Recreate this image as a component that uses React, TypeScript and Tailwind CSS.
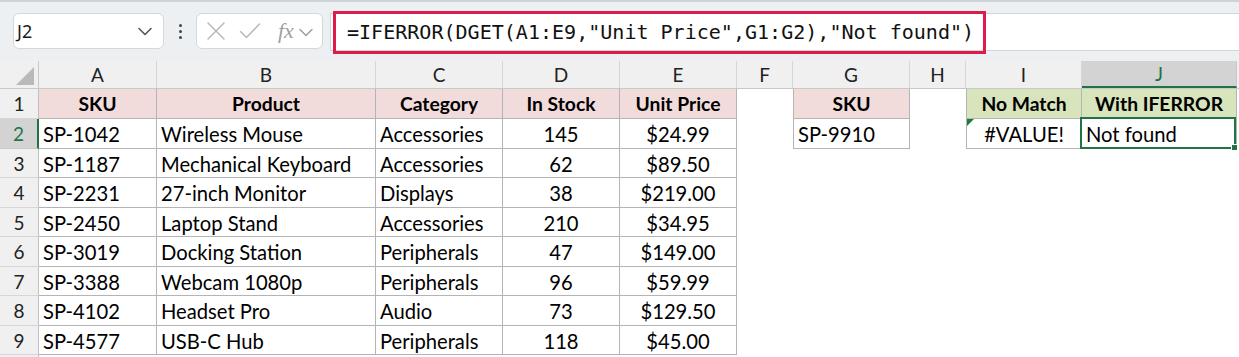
import React from "react";

type Cell = {
  t?: string;
  bg?: "pink" | "green";
  bold?: boolean;
  center?: boolean;
  bordered?: boolean;
  bl?: boolean;
  err?: boolean;
  sel?: boolean;
};

const widths = [118, 219, 127, 117, 117, 56, 117, 56, 116, 155];
const letters = ["A", "B", "C", "D", "E", "F", "G", "H", "I", "J"];
const rowHeights = [30, 30, 29, 30, 29, 30, 29, 30, 29];

const data: [string, string, string, string, string][] = [
  ["SP-1042", "Wireless Mouse", "Accessories", "145", "$24.99"],
  ["SP-1187", "Mechanical Keyboard", "Accessories", "62", "$89.50"],
  ["SP-2231", "27-inch Monitor", "Displays", "38", "$219.00"],
  ["SP-2450", "Laptop Stand", "Accessories", "210", "$34.95"],
  ["SP-3019", "Docking Station", "Peripherals", "47", "$149.00"],
  ["SP-3388", "Webcam 1080p", "Peripherals", "96", "$59.99"],
  ["SP-4102", "Headset Pro", "Audio", "73", "$129.50"],
  ["SP-4577", "USB-C Hub", "Peripherals", "118", "$45.00"],
];

function buildRows(): Cell[][] {
  const rows: Cell[][] = [];
  rows.push([
    { t: "SKU", bg: "pink", bold: true, center: true, bordered: true },
    { t: "Product", bg: "pink", bold: true, center: true, bordered: true },
    { t: "Category", bg: "pink", bold: true, center: true, bordered: true },
    { t: "In Stock", bg: "pink", bold: true, center: true, bordered: true },
    { t: "Unit Price", bg: "pink", bold: true, center: true, bordered: true },
    {},
    { t: "SKU", bg: "pink", bold: true, center: true, bordered: true, bl: true },
    {},
    { t: "No Match", bg: "green", bold: true, center: true, bordered: true, bl: true },
    { t: "With IFERROR", bg: "green", bold: true, center: true, bordered: true },
  ]);
  data.forEach((r, i) => {
    const row: Cell[] = [
      { t: r[0], bordered: true },
      { t: r[1], bordered: true },
      { t: r[2], bordered: true },
      { t: r[3], bordered: true, center: true },
      { t: r[4], bordered: true, center: true },
    ];
    if (i === 0) {
      row.push({}, { t: "SP-9910", bordered: true, bl: true }, {}, { t: "#VALUE!", bordered: true, bl: true, center: true, err: true }, { t: "Not found", bordered: true, sel: true });
    } else {
      row.push({}, {}, {}, {}, {});
    }
    rows.push(row);
  });
  return rows;
}

function Chevron() {
  return (
    <svg width="14" height="9" viewBox="0 0 14 9" fill="none">
      <path d="M1 1.5 L7 7.5 L13 1.5" stroke="#555" strokeWidth="1.6" strokeLinecap="round" strokeLinejoin="round" />
    </svg>
  );
}

function Toolbar() {
  return (
    <div className="h-[61px] bg-[#edf0f3] border-t-[2px] border-[#cfd2d6] flex items-start pt-[11px]">
      <div className="ml-[13px] w-[151px] h-[36px] bg-white rounded-[6px] border border-[#d5d8db] flex items-center justify-between pl-[3px] pr-[11px]">
        <span className="text-[18px] text-[#1a1a1a] font-['Noto_Sans',sans-serif] leading-none">J2</span>
        <Chevron />
      </div>
      <div className="w-[32px] h-[36px] flex flex-col items-center justify-center gap-[3px]">
        <div className="w-[3px] h-[3px] rounded-full bg-[#444]" />
        <div className="w-[3px] h-[3px] rounded-full bg-[#444]" />
        <div className="w-[3px] h-[3px] rounded-full bg-[#444]" />
      </div>
      <div className="w-[127px] h-[36px] bg-white rounded-[6px] border border-[#d5d8db] flex items-center pl-[9px]">
        <svg width="20" height="20" viewBox="0 0 20 20" fill="none">
          <path d="M2 2 L18 18 M18 2 L2 18" stroke="#b8b8b8" strokeWidth="1.5" strokeLinecap="round" />
        </svg>
        <svg width="22" height="18" viewBox="0 0 22 18" fill="none" className="ml-[13px]">
          <path d="M1.5 9.5 L7.5 15.5 L20.5 2" stroke="#b8b8b8" strokeWidth="1.5" strokeLinecap="round" strokeLinejoin="round" />
        </svg>
        <span className="ml-[17px] text-[22px] italic text-[#a0a0a0] font-['Liberation_Serif',serif] leading-none">fx</span>
        <div className="ml-[5px] mt-[2px]">
          <svg width="14" height="9" viewBox="0 0 14 9" fill="none">
            <path d="M1 1.5 L7 7.5 L13 1.5" stroke="#9a9a9a" strokeWidth="1.4" strokeLinecap="round" strokeLinejoin="round" />
          </svg>
        </div>
      </div>
      <div className="ml-[7px] flex-1 h-[38px] bg-white border-y border-l border-[#d3d6d9] flex items-center">
        <div className="ml-[2px] w-[653px] h-[43px] shrink-0 border-[3px] border-[#dd1c4b] flex items-center pl-[11px] pt-[1px]">
          <span className="text-[20.05px] text-[#111] font-['DejaVu_Sans_Mono',monospace] leading-none whitespace-nowrap">
            =IFERROR(DGET(A1:E9,"Unit Price",G1:G2),"Not found")
          </span>
        </div>
      </div>
    </div>
  );
}

function ColumnHeader() {
  return (
    <div className="flex h-[28px] bg-[#f0f0f0] border-b border-[#c8c8c8]">
      <div className="w-[39px] shrink-0 relative border-r border-[#c8c8c8]">
        <svg width="20" height="20" viewBox="0 0 20 20" className="absolute right-[3px] bottom-[2px]">
          <polygon points="19,1 19,19 1,19" fill="#b9b9b9" />
        </svg>
      </div>
      {letters.map((l, i) => {
        const sel = l === "J";
        return (
          <div
            key={l}
            style={{ width: widths[i] }}
            className={
              sel
                ? "shrink-0 flex items-center justify-center pt-[2px] bg-[#d3d3d3] border-b-[2px] border-b-[#217346] border-r border-r-[#c8c8c8] text-[#217346] text-[19px] font-['Lato',sans-serif]"
                : "shrink-0 flex items-center justify-center pt-[2px] border-r border-[#d6d6d6] text-[#222] text-[19px] font-['Lato',sans-serif]"
            }
          >
            {l}
          </div>
        );
      })}
    </div>
  );
}

function DataCell({ c, w }: { c: Cell; w: number }) {
  const bgc = c.bg === "pink" ? "bg-[#f2dcdb]" : c.bg === "green" ? "bg-[#d8e4bc]" : "bg-white";
  const border = c.bordered ? "border-r border-b border-[#b4b4b4]" : "";
  const bl = c.bl ? "border-l" : "";
  const align = c.center ? "justify-center" : "justify-start pl-[4px]";
  const weight = c.bold ? "font-bold text-[19.3px]" : "font-normal text-[20.2px]";
  const z = c.sel ? "z-10" : "";
  return (
    <div
      style={{ width: w }}
      className={`shrink-0 relative flex items-center pt-[2px] ${z} ${bgc} ${border} ${bl} ${align} ${weight} text-black font-['Lato',sans-serif] whitespace-nowrap`}
    >
      {c.t}
      {c.err && (
        <svg width="7" height="7" viewBox="0 0 7 7" className="absolute left-[0px] top-[0px]">
          <polygon points="0,0 7,0 0,7" fill="#1e7b3c" />
        </svg>
      )}
      {c.sel && (
        <div className="absolute left-[-2px] top-[-2px] right-[0px] bottom-[-1px] border-[2px] border-[#217346]">
          <div className="absolute right-[-4px] bottom-[-4px] w-[7px] h-[7px] bg-[#217346] border border-white" />
        </div>
      )}
    </div>
  );
}

export default function App() {
  const rows = buildRows();
  return (
    <div className="w-[1239px] h-[357px] overflow-hidden bg-white">
      <Toolbar />
      <ColumnHeader />
      {rows.map((r, i) => {
        const selRow = i === 1;
        return (
          <div key={i} className={selRow ? "flex relative z-10" : "flex"} style={{ height: rowHeights[i] }}>
            <div
              className={
                selRow
                  ? "w-[39px] shrink-0 flex items-center justify-center pt-[2px] bg-[#d3d3d3] border-r-[2px] border-r-[#217346] border-b border-b-[#c8c8c8] text-[#217346] text-[19px] font-['Lato',sans-serif]"
                  : "w-[39px] shrink-0 flex items-center justify-center pt-[2px] bg-[#f0f0f0] border-r border-r-[#c0c0c0] border-b border-b-[#d6d6d6] text-[#222] text-[19px] font-['Lato',sans-serif]"
              }
            >
              {i + 1}
            </div>
            {r.map((c, j) => (
              <DataCell key={j} c={c} w={widths[j]} />
            ))}
          </div>
        );
      })}
      <div className="flex h-[10px]">
        <div className="w-[39px] shrink-0 bg-[#f0f0f0] border-r border-r-[#c0c0c0]" />
      </div>
    </div>
  );
}
